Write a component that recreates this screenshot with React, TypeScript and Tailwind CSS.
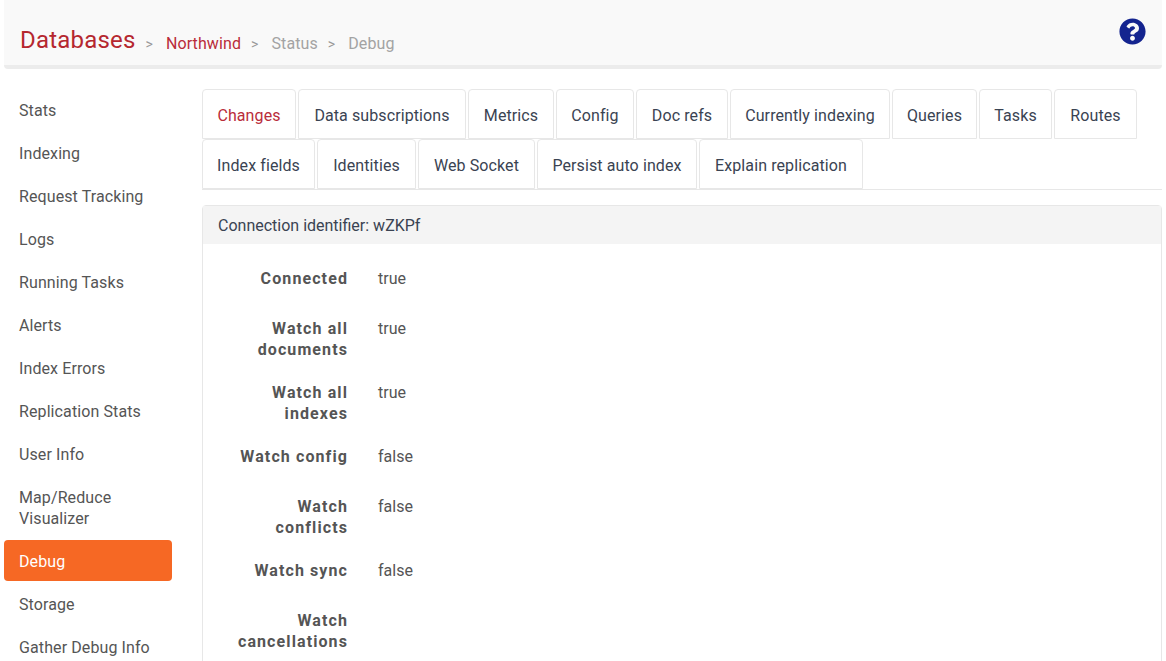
import React from 'react';
import { FaQuestionCircle } from 'react-icons/fa';

const sideItems = ['Stats', 'Indexing', 'Request Tracking', 'Logs', 'Running Tasks', 'Alerts', 'Index Errors', 'Replication Stats', 'User Info', 'Map/Reduce Visualizer', 'Debug', 'Storage', 'Gather Debug Info'];

const tabs = [
  { label: 'Changes', width: 'w-[94px]' },
  { label: 'Data subscriptions', width: 'w-[168px]' },
  { label: 'Metrics', width: 'w-[86px]' },
  { label: 'Config', width: 'w-[78px]' },
  { label: 'Doc refs', width: 'w-[92px]' },
  { label: 'Currently indexing', width: 'w-[160px]' },
  { label: 'Queries', width: 'w-[85px]' },
  { label: 'Tasks', width: 'w-[73px]' },
  { label: 'Routes', width: 'w-[83px]' },
  { label: 'Index fields', width: 'w-[113px]' },
  { label: 'Identities', width: 'w-[99px]' },
  { label: 'Web Socket', width: 'w-[117px]' },
  { label: 'Persist auto index', width: 'w-[160px]' },
  { label: 'Explain replication', width: 'w-[164px]' },
];

const rows = [
  ['Connected', 'true'],
  ['Watch all documents', 'true'],
  ['Watch all indexes', 'true'],
  ['Watch config', 'false'],
  ['Watch conflicts', 'false'],
  ['Watch sync', 'false'],
  ['Watch cancellations', ''],
];

const Sep = () => <span className="mx-[10px] text-sm text-[#999]">&gt;</span>;

const App = () => {
  return (
    <div className="h-screen overflow-hidden bg-white font-['Roboto',sans-serif] text-base leading-[21px] text-[#555]">
      <header className="mx-1 flex h-[69px] justify-between rounded-b border-b-4 border-[#ececec] bg-[#f9f9f9] px-4">
        <div className="flex items-baseline pt-[25px]">
          <span className="text-2xl leading-[30px] tracking-[0.2px] text-[#b5272f]">Databases</span>
          <div className="flex translate-y-px items-baseline tracking-[0.1px]">
            <Sep />
            <span className="ml-[3px] text-[#b92c3a]">Northwind</span>
            <Sep />
            <span className="ml-[3px] text-[#a3a3a3]">Status</span>
            <Sep />
            <span className="ml-[3px] text-[#a3a3a3]">Debug</span>
          </div>
        </div>
        <FaQuestionCircle className="mt-[18px] text-[#14248f]" size={27} />
      </header>

      <div className="flex pt-5">
        <nav className="ml-1 flex w-[168px] shrink-0 flex-col gap-[2px] pt-[1px] tracking-[0.1px]">
          {sideItems.map((item) => (
            <div
              key={item}
              className={item === 'Debug' ? '-mt-px mb-px rounded bg-[#f66824] px-[15px] pt-[11px] pb-[9px] text-white' : 'px-[15px] py-[10px]'}
            >
              {item}
            </div>
          ))}
        </nav>

        <main className="ml-[30px] min-w-0 flex-1 pr-1">
          <div className="flex flex-wrap border-b border-[#e7e7e7] tracking-[0.1px]">
            {tabs.map((tab) => (
              <div
                key={tab.label}
                className={
                  'mr-[2px] h-[50px] rounded-t border border-[#e7e7e7] py-[15px] text-center whitespace-nowrap ' +
                  tab.width +
                  (tab.label === 'Changes' ? ' text-[#b92c3a]' : ' text-[#3a4352]')
                }
              >
                {tab.label}
              </div>
            ))}
          </div>

          <section className="mt-[15px] rounded border border-[#e7e7e7]">
            <div className="h-[38px] bg-[#f4f4f4] px-[15px] py-[9px] text-[#3a4352]">Connection identifier: wZKPf</div>
            <div className="pt-[17px]">
              {rows.map(([label, value]) => (
                <div key={label} className="mb-[15px] flex">
                  <div className="w-[160px] shrink-0 pt-[7px] pr-[15px] pl-[20px] text-right font-bold tracking-[1.1px]">{label}</div>
                  <div className="min-h-[35px] px-[15px] py-[7px]">{value}</div>
                </div>
              ))}
            </div>
          </section>
        </main>
      </div>
    </div>
  );
};

export default App;
